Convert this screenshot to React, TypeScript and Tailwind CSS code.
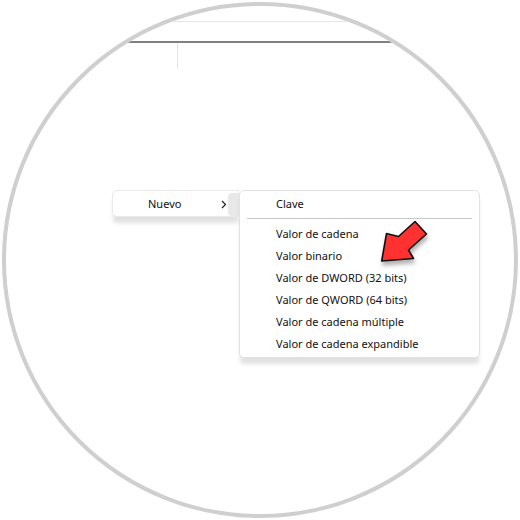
const items = [
  "Valor de cadena",
  "Valor binario",
  "Valor de DWORD (32 bits)",
  "Valor de QWORD (64 bits)",
  "Valor de cadena múltiple",
  "Valor de cadena expandible",
];

const font = { fontFamily: '"Noto Sans", "Segoe UI", sans-serif' };

function Chevron() {
  return (
    <svg width="6" height="9" viewBox="0 0 6 9" className="shrink-0">
      <path d="M1 1 L4.5 4.5 L1 8" fill="none" stroke="#222" strokeWidth="1.2" />
    </svg>
  );
}

function RedArrow() {
  return (
    <svg
      width="75"
      height="75"
      viewBox="0 0 75 75"
      className="absolute left-[365px] top-[205px] drop-shadow-[1px_4px_2px_rgba(0,0,0,0.3)]"
    >
      <polygon
        points="16.7,56 48.5,53.5 43.5,45 61.5,29 50,16.5 33.5,31.5 21.5,28.5"
        fill="#ff3131"
        stroke="#111"
        strokeWidth="1.6"
        strokeLinejoin="round"
      />
    </svg>
  );
}

export default function App() {
  return (
    <div className="relative w-[520px] h-[520px] bg-white p-[2px]" style={font}>
      <div className="w-[516px] h-[516px] rounded-full border-[4px] border-[#cfcfcf] overflow-hidden bg-white">
        {/* header strip */}
        <div className="mt-[15px] h-[22px] border-t border-[#e6e6e6] border-b-2 border-b-[#7e8089]" />
        <div className="h-[25px] w-[172px] border-r border-[#e3e3e3]" />

        {/* menus */}
        <div className="mt-[122px] ml-[106px] flex items-start text-[11px] text-[#111]">
          <div className="w-[127px] h-[27px] bg-white border border-[#e9e9e9] rounded-l-[5px] shadow-[0_7px_4px_-1px_rgba(0,0,0,0.12)] pt-[2px]">
            <div className="h-[22px] flex items-center pl-[35px]">
              <span>Nuevo</span>
              <div className="flex-1" />
              <Chevron />
              <div className="ml-[1px] w-[10px] h-[23px] rounded-l-[4px] bg-[#e8e8e8]" />
            </div>
          </div>

          <div className="w-[241px] h-[168px] bg-white border border-[#e2e2e2] rounded-[5px] shadow-[0_7px_4px_-1px_rgba(0,0,0,0.12)] pt-[2px] px-[7px]">
            <div className="h-[22px] leading-[22px] pl-[29px]">Clave</div>
            <div className="mt-[3px] h-px bg-[#c9c9c9]" />
            <div className="mt-[4px] flex flex-col">
              {items.map((t) => (
                <div key={t} className="h-[22px] leading-[22px] pl-[29px]">
                  {t}
                </div>
              ))}
            </div>
          </div>
        </div>
      </div>
      <RedArrow />
    </div>
  );
}
